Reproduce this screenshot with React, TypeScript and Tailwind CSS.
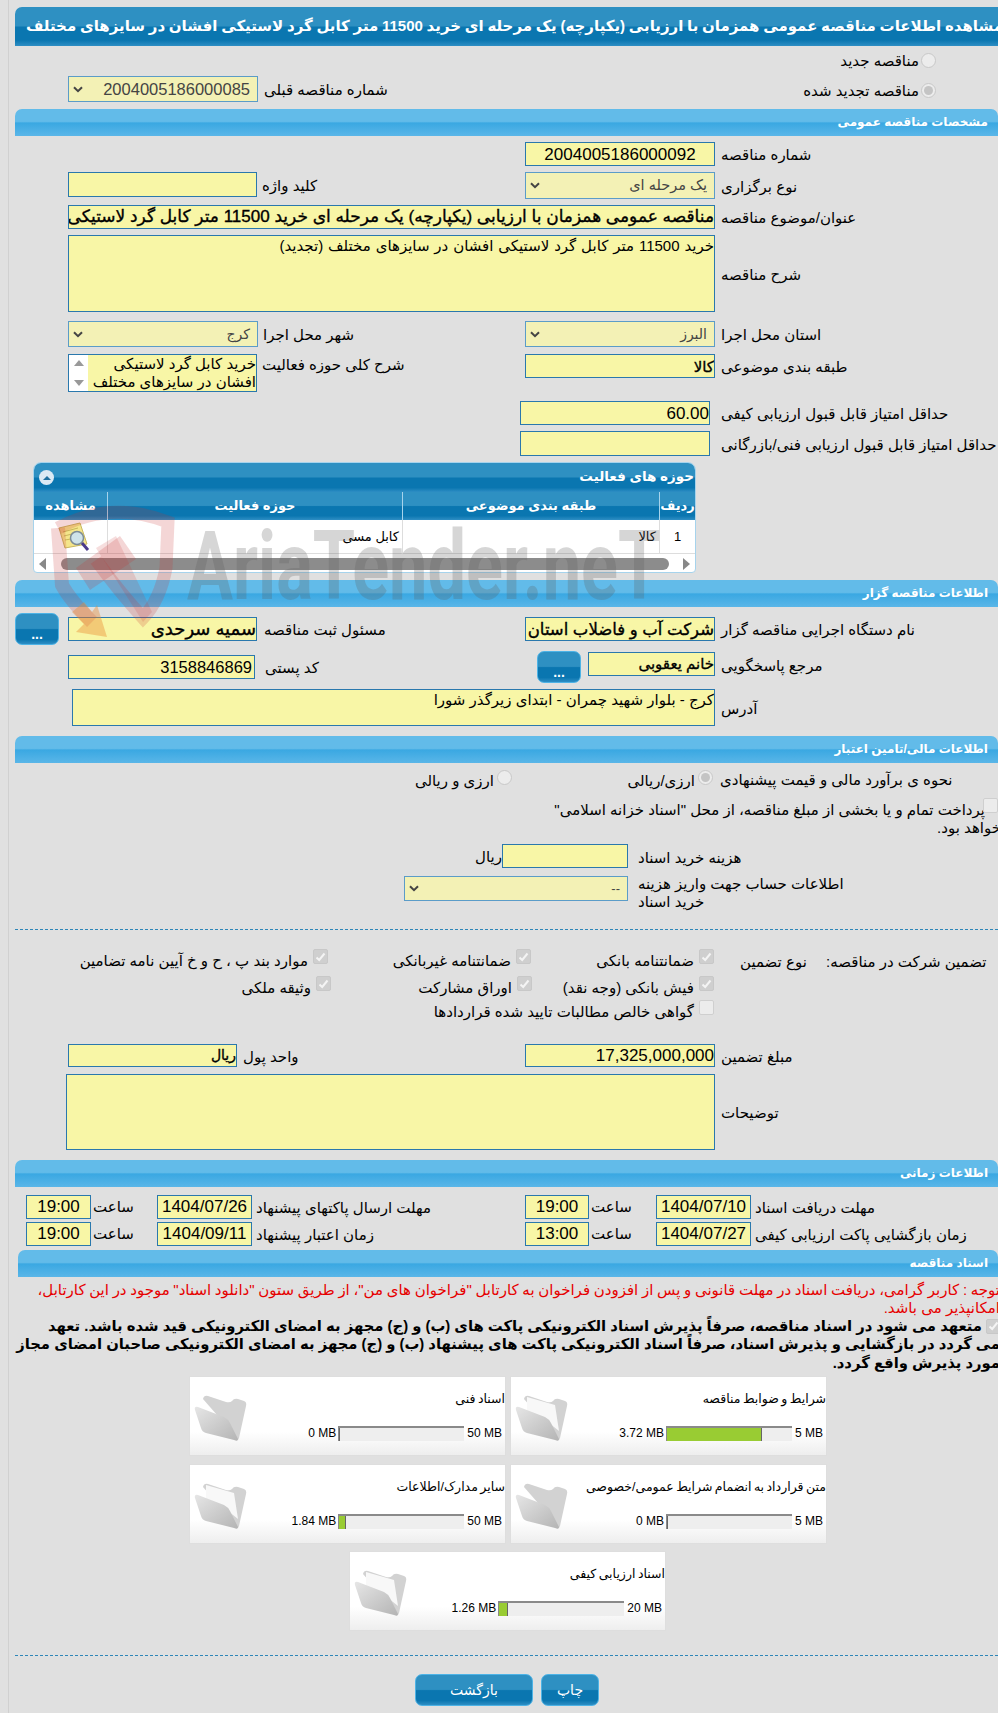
import React from "react";

const bar = "bg-[linear-gradient(to_bottom,#62bbe9_0%,#62bbe9_46%,#3aa8e2_52%,#5ab6e8_100%)]";
const dark = "bg-[linear-gradient(to_bottom,#2e90c2_0%,#2e90c2_48%,#0a76b0_52%,#0a76b0_85%,#2e8ec4_100%)]";

function Section({ title, className = "" }: { title: string; className?: string }) {
  return (
    <div dir="rtl" className={`h-[27px] shrink-0 rounded-tl-[7px] rounded-tr-[7px] ${bar} pr-[10px] text-[12px] leading-[27px] font-bold text-white ${className}`}>
      {title}
    </div>
  );
}

function Field({ className = "", children, bold }: { className?: string; children?: React.ReactNode; bold?: boolean }) {
  return (
    <div dir="rtl" className={`shrink-0 overflow-hidden whitespace-nowrap border border-[#2a78ad] bg-[#f8f6a6] text-black ${bold ? "[-webkit-text-stroke:0.35px_#000]" : ""} ${className}`}>
      {children}
    </div>
  );
}

function Chevron() {
  return (
    <svg width="10" height="7" viewBox="0 0 10 7" className="shrink-0">
      <path d="M1 1.2 L5 5.2 L9 1.2" fill="none" stroke="#444" strokeWidth="2" />
    </svg>
  );
}

function Select({ className = "", children }: { className?: string; children?: React.ReactNode }) {
  return (
    <div className={`flex shrink-0 items-center justify-between border border-[#5b9cc8] bg-[#f3f1b5] pl-[4px] pr-[7px] text-[#444] ${className}`}>
      <Chevron />
      <span dir="rtl">{children}</span>
    </div>
  );
}

function Label({ children, className = "" }: { children: React.ReactNode; className?: string }) {
  return (
    <span dir="rtl" className={`shrink-0 whitespace-nowrap pt-[2px] text-[15px] leading-[18px] text-black ${className}`}>
      {children}
    </span>
  );
}

function Radio({ checked }: { checked?: boolean }) {
  return (
    <span className="flex h-[15px] w-[15px] shrink-0 items-center justify-center rounded-full border border-[#c8c8c8] bg-[#ececec]">
      {checked && <span className="h-[9px] w-[9px] rounded-full bg-[#c4c4c4]" />}
    </span>
  );
}

function Check({ checked }: { checked?: boolean }) {
  return (
    <span className={`flex h-[15px] w-[15px] shrink-0 items-center justify-center rounded-[2px] border ${checked ? "border-[#c8c8c8] bg-[#cfcfcf]" : "border-[#cfcfcf] bg-[#ececec]"}`}>
      {checked && (
        <svg width="11" height="10" viewBox="0 0 11 10">
          <path d="M1.5 5.5 L4.2 8 L9.5 1.5" fill="none" stroke="#f4f4f4" strokeWidth="2" />
        </svg>
      )}
    </span>
  );
}

function Guarantee({ text, checked = true, className = "" }: { text: string; checked?: boolean; className?: string }) {
  return (
    <div className={`flex shrink-0 items-start justify-end gap-[5px] ${className}`}>
      <Label className="mt-[1px]">{text}</Label>
      <Check checked={checked} />
    </div>
  );
}

function DotsButton({ className = "" }: { className?: string }) {
  return (
    <div className={`flex h-[32px] w-[44px] shrink-0 items-end justify-center rounded-[7px] border border-[#4db3e6] ${dark} pb-[3px] text-[14px] leading-[14px] font-bold text-white ${className}`}>
      ...
    </div>
  );
}

function Folder({ paper }: { paper?: boolean }) {
  return (
    <svg width="54" height="50" viewBox="0 0 54 50" className="shrink-0">
      <defs>
        <linearGradient id="fg" x1="0" y1="0" x2="1" y2="1">
          <stop offset="0" stopColor="#e6e6e6" />
          <stop offset="1" stopColor="#b4b4b4" />
        </linearGradient>
      </defs>
      <path d="M9 6 Q10 2 14 3 L32 9 Q36 10 38 8 Q40 5 44 6 L50 8 Q53 9 52 13 L45 45 Q44 48 42 47 L30 30 Z" fill="#d2d2d2" />
      {paper && <path d="M12 4 L40 12 L44 38 L34 30 L12 20 Z" fill="#f8f8f8" />}
      <path d="M1 17 Q0 13 4 14 L30 24 Q34 26 36 30 L44 46 Q44 49 40 47 L12 40 Q8 39 7 35 Z" fill="url(#fg)" />
    </svg>
  );
}

function FileCard({ title, used, max, pct, paper }: { title: string; used: string; max: string; pct: number; paper?: boolean }) {
  return (
    <div className="flex h-[80px] w-[317px] shrink-0 border border-[#dedede] bg-[linear-gradient(to_bottom,#ffffff_0%,#ffffff_70%,#eeeeee_100%)]">
      <div className="ml-[4px] mt-[16px]"><Folder paper={paper} /></div>
      <div className="flex flex-1 flex-col items-end pt-[13px]">
        <span dir="rtl" className="whitespace-nowrap text-[12.5px] leading-[18px] [word-spacing:-1px] text-black">{title}</span>
        <div className="mt-[16px] flex items-center pr-[3px]">
          <span className="mr-[2px] whitespace-nowrap text-[12px] text-black">{used}</span>
          <div className="h-[15px] w-[126px] border-t-2 border-l border-[#8a8a8a] bg-[#eeeeee]">
            <div className="h-full border-r border-[#666] bg-[#99cc33]" style={{ width: `${pct}%` }} />
          </div>
          <span className="ml-[3px] whitespace-nowrap text-[12px] text-black">{max}</span>
        </div>
      </div>
    </div>
  );
}

function Watermark() {
  return (
    <div className="pointer-events-none absolute left-0 top-0">
      <svg width="200" height="660" viewBox="0 0 200 660" className="absolute left-0 top-0">
        <path d="M58 528 Q110 500 168 522 L166 568 Q160 600 143 618 Q118 590 96 560" fill="none" stroke="#c83030" strokeOpacity="0.2" strokeWidth="13" />
        <path d="M58 528 L62 585 Q70 600 92 622" fill="none" stroke="#c83030" strokeOpacity="0.2" strokeWidth="14" />
        <path d="M76 568 L120 536 L136 559 L90 590 Z" fill="#c83030" fillOpacity="0.2" />
        <path d="M96 548 L116 536 L152 612 L143 622 Z" fill="#c83030" fillOpacity="0.16" />
        <path d="M72 612 L84 602 L92 612 L97 605 L107 637 L76 632 L84 624 Z" fill="#e88a30" fillOpacity="0.4" />
      </svg>
      <span className="absolute left-[187px] top-[506px] origin-left scale-x-[0.713] whitespace-nowrap text-[96px] leading-[120px] font-bold text-[#5a5a5a]/25 font-['Roboto',sans-serif]">
        AriaTender.neT
      </span>
    </div>
  );
}

export default function App() {
  return (
    <div className="relative h-[1713px] w-[998px] overflow-hidden bg-[#e0e0e0] font-['Liberation_Sans','DejaVu_Sans',sans-serif]">
      <div className="ml-[8px] flex h-full flex-col border-l border-[#d0d0d0] pl-[6px] pt-[7px]">
        {/* Title */}
        <div className={`h-[39px] shrink-0 overflow-hidden rounded-tl-[7px] ${dark}`}>
          <span dir="rtl" className="ml-[11px] inline-block whitespace-nowrap text-[15px] leading-[38px] [word-spacing:-0.45px] font-bold text-white">
            مشاهده اطلاعات مناقصه عمومی همزمان با ارزیابی (یکپارچه) یک مرحله ای خرید 11500 متر کابل گرد لاستیکی افشان در سایزهای مختلف
          </span>
        </div>

        <div className="flex h-[28px] items-center justify-end gap-[2px] pr-[62px]">
          <Label>مناقصه جدید</Label>
          <Radio />
        </div>
        <div className="flex h-[35px] items-start justify-between pl-[53px] pr-[62px]">
          <div className="mt-[2px] flex items-center">
            <Select className="h-[26px] w-[190px] text-[16.5px]">2004005186000085</Select>
            <Label className="ml-[6px]">شماره مناقصه قبلی</Label>
          </div>
          <div className="mt-[6px] flex items-center gap-[2px]">
            <Label>مناقصه تجدید شده</Label>
            <Radio checked />
          </div>
        </div>

        <Section title="مشخصات مناقصه عمومی" />

        {/* General */}
        <div className="mt-[6px] grid h-[30px] grid-cols-[510px_473px]">
          <div />
          <div className="flex h-[24px] items-center">
            <Field className="h-[24px] w-[190px] text-center text-[17px] leading-[23px]">2004005186000092</Field>
            <Label className="ml-[6px]">شماره مناقصه</Label>
          </div>
        </div>
        <div className="grid h-[33px] grid-cols-[510px_473px]">
          <div className="flex h-[25px] items-center pl-[53px]">
            <Field className="h-[25px] w-[189px]" />
            <Label className="ml-[5px]">کلید واژه</Label>
          </div>
          <div className="flex h-[27px] items-center">
            <Select className="h-[27px] w-[190px] text-[14.5px]">یک مرحله ای</Select>
            <Label className="ml-[6px]">نوع برگزاری</Label>
          </div>
        </div>
        <div className="flex h-[30px] items-start pl-[53px]">
          <div className="flex h-[24px] items-center">
            <Field bold className="h-[24px] w-[647px] text-[17px] leading-[22px]">
              مناقصه عمومی همزمان با ارزیابی (یکپارچه) یک مرحله ای خرید 11500 متر کابل گرد لاستیکی افشان در سایزهای مختلف
            </Field>
            <Label className="ml-[6px]">عنوان/موضوع مناقصه</Label>
          </div>
        </div>
        <div className="flex h-[86px] items-start pl-[53px]">
          <div className="flex h-[77px] items-center">
            <Field className="h-[77px] w-[647px] text-[15px] leading-[20px] [word-spacing:0.7px]">
              خرید 11500 متر کابل گرد لاستیکی افشان در سایزهای مختلف (تجدید)
            </Field>
            <Label className="ml-[6px]">شرح مناقصه</Label>
          </div>
        </div>
        <div className="grid h-[33px] grid-cols-[510px_473px]">
          <div className="flex h-[26px] items-center pl-[53px]">
            <Select className="h-[26px] w-[190px] text-[14px]">کرج</Select>
            <Label className="ml-[5px]">شهر محل اجرا</Label>
          </div>
          <div className="flex h-[26px] items-center">
            <Select className="h-[26px] w-[190px] text-[14px]">البرز</Select>
            <Label className="ml-[6px]">استان محل اجرا</Label>
          </div>
        </div>
        <div className="grid h-[47px] grid-cols-[510px_473px]">
          <div className="flex items-start pl-[53px]">
            <div className="flex h-[38px] w-[189px] shrink-0 border border-[#2a78ad] bg-[#f8f6a6]">
              <div className="flex w-[19px] shrink-0 flex-col items-center justify-between bg-white py-[5px]">
                <span className="h-0 w-0 border-x-[5px] border-b-[6px] border-x-transparent border-b-[#999]" />
                <span className="h-0 w-0 border-x-[5px] border-t-[6px] border-x-transparent border-t-[#999]" />
              </div>
              <div dir="rtl" className="flex-1 overflow-hidden text-[15px] leading-[18px] text-black">
                خرید کابل گرد لاستیکی افشان در سایزهای مختلف
              </div>
            </div>
            <Label className="ml-[5px]">شرح کلی حوزه فعالیت</Label>
          </div>
          <div className="flex h-[24px] items-center">
            <Field bold className="h-[24px] w-[190px] text-[15px] leading-[23px]">کالا</Field>
            <Label className="ml-[6px]">طبقه بندی موضوعی</Label>
          </div>
        </div>
        <div className="flex h-[30px] items-start pl-[505px]">
          <div className="flex h-[24px] items-center">
            <Field className="h-[24px] w-[190px] text-[17px] leading-[23px]">60.00</Field>
            <Label className="ml-[11px]">حداقل امتیاز قابل قبول ارزیابی کیفی</Label>
          </div>
        </div>
        <div className="flex h-[31px] items-start pl-[505px]">
          <div className="flex h-[25px] items-center">
            <Field className="h-[25px] w-[190px]" />
            <Label className="ml-[11px]">حداقل امتیاز قابل قبول ارزیابی فنی/بازرگانی</Label>
          </div>
        </div>

        {/* Activity table */}
        <div className="ml-[18px] h-[111px] w-[663px] shrink-0 overflow-hidden rounded-b-[4px] rounded-t-[8px] border border-[#a6d3ec] bg-white">
          <div className={`flex h-[29px] items-center justify-between ${dark} pl-[5px] pr-[1px]`}>
            <span className="flex h-[15px] w-[15px] items-center justify-center rounded-full bg-[#dbe9f4]">
              <span className="h-0 w-0 border-x-[4px] border-b-[4px] border-x-transparent border-b-[#1f6f9f]" />
            </span>
            <span dir="rtl" className="text-[13.5px] font-bold text-white">حوزه های فعالیت</span>
          </div>
          <div dir="rtl" className="grid grid-cols-[36px_257px_295px_1fr]">
            {["ردیف", "طبقه بندی موضوعی", "حوزه فعالیت", "مشاهده"].map((h, i) => (
              <div key={h} className={`flex h-[28px] items-center justify-center whitespace-nowrap ${dark} text-[13px] font-bold text-white ${i < 3 ? "border-l border-[#a6d3ec]" : ""}`}>
                {h}
              </div>
            ))}
            <div className="flex h-[34px] items-center justify-center border-b border-l border-[#dddddd] text-[13px]">1</div>
            <div className="flex h-[34px] items-center border-b border-l border-[#dddddd] pr-[3px] text-[13px]">کالا</div>
            <div className="flex h-[34px] items-center border-b border-l border-[#dddddd] pr-[3px] text-[13px]">کابل مسی</div>
            <div className="flex h-[34px] items-center justify-center border-b border-[#dddddd]">
              <svg width="38" height="30" viewBox="0 0 38 30">
                <path d="M7 6 L28 1 L35 22 L13 26 Z" fill="#f4e58a" stroke="#c8b860" strokeWidth="1" />
                <path d="M11 10 L26 6 M12 14 L20 12 M13 18 L19 17" stroke="#c9b65a" strokeWidth="1" />
                <circle cx="25" cy="16" r="6.5" fill="#cfe3ea" stroke="#7d8c96" strokeWidth="1.5" />
                <path d="M30 21 L36 28" stroke="#4a3a8a" strokeWidth="3" />
              </svg>
            </div>
          </div>
          <div className="flex h-[20px] items-center justify-between px-[2px]">
            <span className="ml-[3px] h-0 w-0 border-y-[6px] border-r-[7px] border-y-transparent border-r-[#888]" />
            <span className="h-[12px] w-[608px] rounded-full bg-[#8c8c8c]" />
            <span className="mr-[3px] h-0 w-0 border-y-[6px] border-l-[7px] border-y-transparent border-l-[#888]" />
          </div>
        </div>

        <Section title="اطلاعات مناقصه گزار" className="mt-[7px]" />

        <div className="mt-[10px] grid h-[34px] grid-cols-[510px_473px]">
          <div className="flex h-[24px] items-center">
            <DotsButton />
            <Field bold className="ml-[9px] h-[24px] w-[189px] text-[18px] leading-[22px]">سمیه سرحدی</Field>
            <Label className="ml-[7px]">مسئول ثبت مناقصه</Label>
          </div>
          <div className="flex h-[24px] items-center">
            <Field bold className="h-[24px] w-[190px] text-[16.5px] leading-[22px]">شرکت آب و فاضلاب استان البرز</Field>
            <Label className="ml-[6px]">نام دستگاه اجرایی مناقصه گزار</Label>
          </div>
        </div>
        <div className="grid h-[38px] grid-cols-[510px_473px]">
          <div className="mt-[4px] flex h-[24px] items-center pl-[53px]">
            <Field className="h-[24px] w-[187px] pr-[2px] text-[16.5px] leading-[23px]">3158846869</Field>
            <Label className="ml-[10px]">کد پستی</Label>
          </div>
          <div className="flex h-[32px] items-start pl-[12px]">
            <DotsButton />
            <Field bold className="ml-[7px] mt-[1px] h-[24px] w-[127px] text-[15px] leading-[22px]">خانم یعقوبی</Field>
            <Label className="ml-[6px] mt-[4px]">مرجع پاسخگویی</Label>
          </div>
        </div>
        <div className="flex h-[47px] items-start pl-[57px]">
          <div className="flex h-[37px] items-center">
            <Field className="h-[37px] w-[643px] text-[15px] leading-[20px]">کرج - بلوار شهید چمران - ابتدای زیرگذر شورا</Field>
            <Label className="ml-[6px]">آدرس</Label>
          </div>
        </div>

        <Section title="اطلاعات مالی/تامین اعتبار" />

        {/* Finance */}
        <div className="flex h-[32px] shrink-0 items-center">
          <div className="flex w-[705px] justify-end">
            <div className="flex w-[200px] items-center justify-end gap-[3px] pr-[8px]">
              <Label className="mt-[1px]">ارزی و ریالی</Label>
              <span className="-mt-[3px]"><Radio /></span>
            </div>
            <div className="flex w-[200px] items-center justify-end gap-[3px] pr-[7px]">
              <Label className="mt-[1px]">ارزی/ریالی</Label>
              <span className="-mt-[3px]"><Radio checked /></span>
            </div>
          </div>
          <Label>نحوه ی برآورد مالی و قیمت پیشنهادی</Label>
        </div>
        <div className="flex h-[21px] items-start justify-end">
          <Label className="mr-[-2px] mt-[4px]">پرداخت تمام و یا بخشی از مبلغ مناقصه، از محل "اسناد خزانه اسلامی"</Label>
          <span className="mt-[3px]"><Check /></span>
        </div>
        <div className="flex h-[28px] items-start justify-end pt-[1px]">
          <Label className="-mr-[3px]">خواهد بود.</Label>
        </div>
        <div className="flex h-[32px] items-start">
          <div className="flex w-[613px] items-center justify-end">
            <Label>ریال</Label>
            <Field className="h-[24px] w-[126px]" />
          </div>
          <Label className="ml-[10px] mt-[3px]">هزینه خرید اسناد</Label>
        </div>
        <div className="flex h-[53px] items-start">
          <div className="flex w-[613px] justify-end">
            <Select className="h-[25px] w-[224px] text-[13px]">--</Select>
          </div>
          <div className="ml-[10px] -mt-[3px] flex flex-col items-start">
            <Label>اطلاعات حساب جهت واریز هزینه</Label>
            <Label className="-mt-[2px]">خرید اسناد</Label>
          </div>
        </div>
        <div className="h-0 border-t border-dashed border-[#2e86b8]" />

        {/* Guarantee */}
        <div className="mt-[19px] flex h-[27px] items-start">
          <Guarantee className="w-[313px]" text="موارد بند پ ، ح و خ آیین نامه تضامین" />
          <Guarantee className="w-[203px]" text="ضمانتنامه غیربانکی" />
          <Guarantee className="w-[183px]" text="ضمانتنامه بانکی" />
          <div className="ml-[26px] mt-[1px] w-[66px]"><Label>نوع تضمین</Label></div>
          <div className="ml-[20px] mt-[1px]"><Label>تضمین شرکت در مناقصه:</Label></div>
        </div>
        <div className="flex h-[24px] items-start">
          <Guarantee className="w-[316px]" text="وثیقه ملکی" />
          <Guarantee className="w-[201px]" text="اوراق مشارکت" />
          <Guarantee className="w-[182px]" text="فیش بانکی (وجه نقد)" />
        </div>
        <div className="flex h-[44px] items-start">
          <Guarantee className="ml-[516px] w-[183px]" checked={false} text="گواهی خالص مطالبات تایید شده قراردادها" />
        </div>

        <div className="grid h-[30px] grid-cols-[510px_473px]">
          <div className="flex h-[23px] items-center pl-[53px]">
            <Field bold className="h-[23px] w-[169px] text-[14px] leading-[21px]">ریال</Field>
            <Label className="ml-[6px]">واحد پول</Label>
          </div>
          <div className="flex h-[23px] items-center">
            <Field className="h-[23px] w-[190px] text-[17px] leading-[21px]">17,325,000,000</Field>
            <Label className="ml-[6px]">مبلغ تضمین</Label>
          </div>
        </div>
        <div className="flex h-[86px] items-start pl-[51px]">
          <div className="flex h-[76px] items-center">
            <Field className="h-[76px] w-[649px]" />
            <Label className="ml-[6px]">توضیحات</Label>
          </div>
        </div>

        <Section title="اطلاعات زمانی" />

        {/* Dates */}
        <div className="mt-[8px] grid h-[27px] grid-cols-[510px_473px]">
          <div className="flex h-[24px] items-center pl-[11px]">
            <Field className="h-[24px] w-[65px] text-center text-[17px] leading-[22px]">19:00</Field>
            <div className="w-[66px] pl-[2px]"><Label>ساعت</Label></div>
            <Field className="h-[24px] w-[95px] text-center text-[17px] leading-[22px]">1404/07/26</Field>
            <Label className="ml-[4px]">مهلت ارسال پاکتهای پیشنهاد</Label>
          </div>
          <div className="flex h-[24px] items-center">
            <Field className="h-[24px] w-[64px] text-center text-[17px] leading-[22px]">19:00</Field>
            <div className="w-[67px] pl-[2px]"><Label>ساعت</Label></div>
            <Field className="h-[24px] w-[95px] text-center text-[17px] leading-[22px]">1404/07/10</Field>
            <Label className="ml-[4px]">مهلت دریافت اسناد</Label>
          </div>
        </div>
        <div className="grid h-[28px] grid-cols-[510px_473px]">
          <div className="flex h-[24px] items-center pl-[11px]">
            <Field className="h-[24px] w-[65px] text-center text-[17px] leading-[22px]">19:00</Field>
            <div className="w-[66px] pl-[2px]"><Label>ساعت</Label></div>
            <Field className="h-[24px] w-[95px] text-center text-[17px] leading-[22px]">1404/09/11</Field>
            <Label className="ml-[4px]">زمان اعتبار پیشنهاد</Label>
          </div>
          <div className="flex h-[24px] items-center">
            <Field className="h-[24px] w-[64px] text-center text-[17px] leading-[22px]">13:00</Field>
            <div className="w-[67px] pl-[2px]"><Label>ساعت</Label></div>
            <Field className="h-[24px] w-[95px] text-center text-[17px] leading-[22px]">1404/07/27</Field>
            <Label className="ml-[4px]">زمان بازگشایی پاکت ارزیابی کیفی</Label>
          </div>
        </div>

        <Section title="اسناد مناقصه" className="ml-[3px]" />

        {/* Documents */}
        <div dir="rtl" className="mt-[4px] h-[18px] -mr-[2px] whitespace-nowrap text-[15px] leading-[18px] [word-spacing:-0.5px] text-[#e60000]">
          توجه : کاربر گرامی، دریافت اسناد در مهلت قانونی و پس از افزودن فراخوان به کارتابل "فراخوان های من"، از طریق ستون "دانلود اسناد" موجود در این کارتابل،
        </div>
        <div dir="rtl" className="h-[18px] -mr-[2px] whitespace-nowrap text-[15px] leading-[18px] text-[#e60000]">
          امکانپذیر می باشد.
        </div>
        <div dir="rtl" className="flex h-[18px] items-center gap-[4px] -mr-[3px] whitespace-nowrap text-[14.8px] font-bold leading-[18px] text-black">
          <Check checked />
          <span>متعهد می شود در اسناد مناقصه، صرفاً پذیرش اسناد الکترونیکی پاکت های (ب) و (ج) مجهز به امضای الکترونیکی قید شده باشد. تعهد</span>
        </div>
        <div dir="rtl" className="h-[19px] -mr-[2px] whitespace-nowrap text-[14.8px] font-bold leading-[19px] text-black">
          می گردد در بازگشایی و پذیرش اسناد، صرفاً اسناد الکترونیکی پاکت های پیشنهاد (ب) و (ج) مجهز به امضای الکترونیکی صاحبان امضای مجاز
        </div>
        <div dir="rtl" className="h-[20px] -mr-[2px] whitespace-nowrap text-[14.8px] font-bold leading-[19px] text-black">
          مورد پذیرش واقع گردد.
        </div>

        <div className="mt-[2px] flex h-[88px] gap-[4px] pl-[174px]">
          <FileCard title="اسناد فنی" used="0 MB" max="50 MB" pct={0} />
          <FileCard title="شرایط و ضوابط مناقصه" used="3.72 MB" max="5 MB" pct={76} paper />
        </div>
        <div className="flex h-[87px] gap-[4px] pl-[174px]">
          <FileCard title="سایر مدارک/اطلاعات" used="1.84 MB" max="50 MB" pct={5} paper />
          <FileCard title="متن قرارداد به انضمام شرایط عمومی/خصوصی" used="0 MB" max="5 MB" pct={0} />
        </div>
        <div className="flex h-[104px] pl-[334px]">
          <FileCard title="اسناد ارزیابی کیفی" used="1.26 MB" max="20 MB" pct={7} paper />
        </div>
        <div className="h-0 border-t border-dashed border-[#2e86b8]" />

        <div className="mt-[18px] flex gap-[8px] pl-[400px]">
          <div className={`flex h-[32px] w-[118px] items-center justify-center rounded-[7px] border border-[#4db3e6] ${dark} text-[14px] text-white`}>بازگشت</div>
          <div className={`flex h-[32px] w-[58px] items-center justify-center rounded-[7px] border border-[#4db3e6] ${dark} text-[14px] text-white`}>چاپ</div>
        </div>
      </div>
      <Watermark />
    </div>
  );
}
